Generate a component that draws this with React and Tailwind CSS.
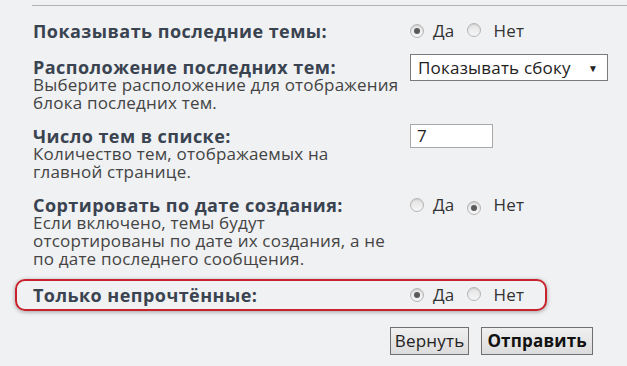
import React from "react";

const Radio = ({ checked }) => (
  <span className="inline-flex items-center justify-center w-[14px] h-[14px] rounded-full border border-[#b5b5b5] bg-gradient-to-b from-[#e2e2e2] to-[#f7f7f7] shadow-[inset_0_1px_1px_rgba(0,0,0,0.1)]">
    {checked && <span className="w-[6px] h-[6px] rounded-full bg-[#5a5a5a]" />}
  </span>
);

const YesNo = ({ yes }) => (
  <div className="flex items-center h-[18px] text-[#333]">
    <Radio checked={yes} />
    <span className="ml-[9px]">Да</span>
    <span className="ml-[13px]"><Radio checked={!yes} /></span>
    <span className="ml-[12px]">Нет</span>
  </div>
);

const Row = ({ title, desc, children, className = "" }) => (
  <div className={"flex " + className}>
    <div className="w-[377px] shrink-0">
      <div className="font-bold text-[18px] tracking-[0.45px] text-[#3a4350] whitespace-nowrap">{title}</div>
      {desc && <div className="text-[#444] whitespace-nowrap">{desc}</div>}
    </div>
    <div>{children}</div>
  </div>
);

export default function App() {
  return (
    <div
      className="w-[627px] h-[366px] bg-[#f0f1f3] pl-[33px] pt-[5px] text-[17px] leading-[18px] tracking-[0.2px] overflow-hidden"
      style={{ fontFamily: '"Open Sans", "Noto Sans", sans-serif' }}
    >
      <div className="ml-[-1px] border-t border-[#b3b3b3]" />

      {/* настройки последних тем */}
      <Row title="Показывать последние темы:" className="mt-[16px]">
        <YesNo yes />
      </Row>

      <Row
        title="Расположение последних тем:"
        desc={<>Выберите расположение для отображения<br />блока последних тем.</>}
        className="mt-[18px]"
      >
        <div className="mt-[-4px] w-[198px] h-[27px] bg-white border border-[#7a7a7a] flex items-center justify-between pl-[7px] pr-[9px] text-[#222]">
          <span>Показывать сбоку</span>
          <span className="text-[10px]">▼</span>
        </div>
      </Row>

      <Row
        title="Число тем в списке:"
        desc={<>Количество тем, отображаемых на<br />главной странице.</>}
        className="mt-[15px]"
      >
        <div className="mt-[-3px] w-[83px] h-[24px] bg-white border border-[#a9a9a9] flex items-center pl-[6px] text-[#222]">
          7
        </div>
      </Row>

      <Row
        title="Сортировать по дате создания:"
        desc={<>Если включено, темы будут<br />отсортированы по дате их создания, а не<br />по дате последнего сообщения.</>}
        className="mt-[15px]"
      >
        <YesNo yes={false} />
      </Row>

      {/* выделенная строка */}
      <div className="mt-[11px] ml-[-18px] w-[532px] h-[32px] rounded-[10px] border-2 border-[#c8232c] shadow-[0_1px_4px_rgba(0,0,0,0.35)] flex items-center pl-[16px]">
        <div className="w-[377px] shrink-0 font-bold text-[18px] tracking-[0.45px] text-[#3a4350]">Только непрочтённые:</div>
        <YesNo yes />
      </div>

      <div className="mt-[16px] w-[560px] flex justify-end gap-[12px]">
        <button className="h-[28px] px-[4px] border border-[#707070] bg-gradient-to-b from-[#f0f0f0] to-[#dcdcdc] text-[#222]">
          Вернуть
        </button>
        <button className="h-[28px] px-[5px] border border-[#707070] bg-gradient-to-b from-[#f0f0f0] to-[#dcdcdc] font-bold text-[#111]">
          Отправить
        </button>
      </div>
    </div>
  );
}
